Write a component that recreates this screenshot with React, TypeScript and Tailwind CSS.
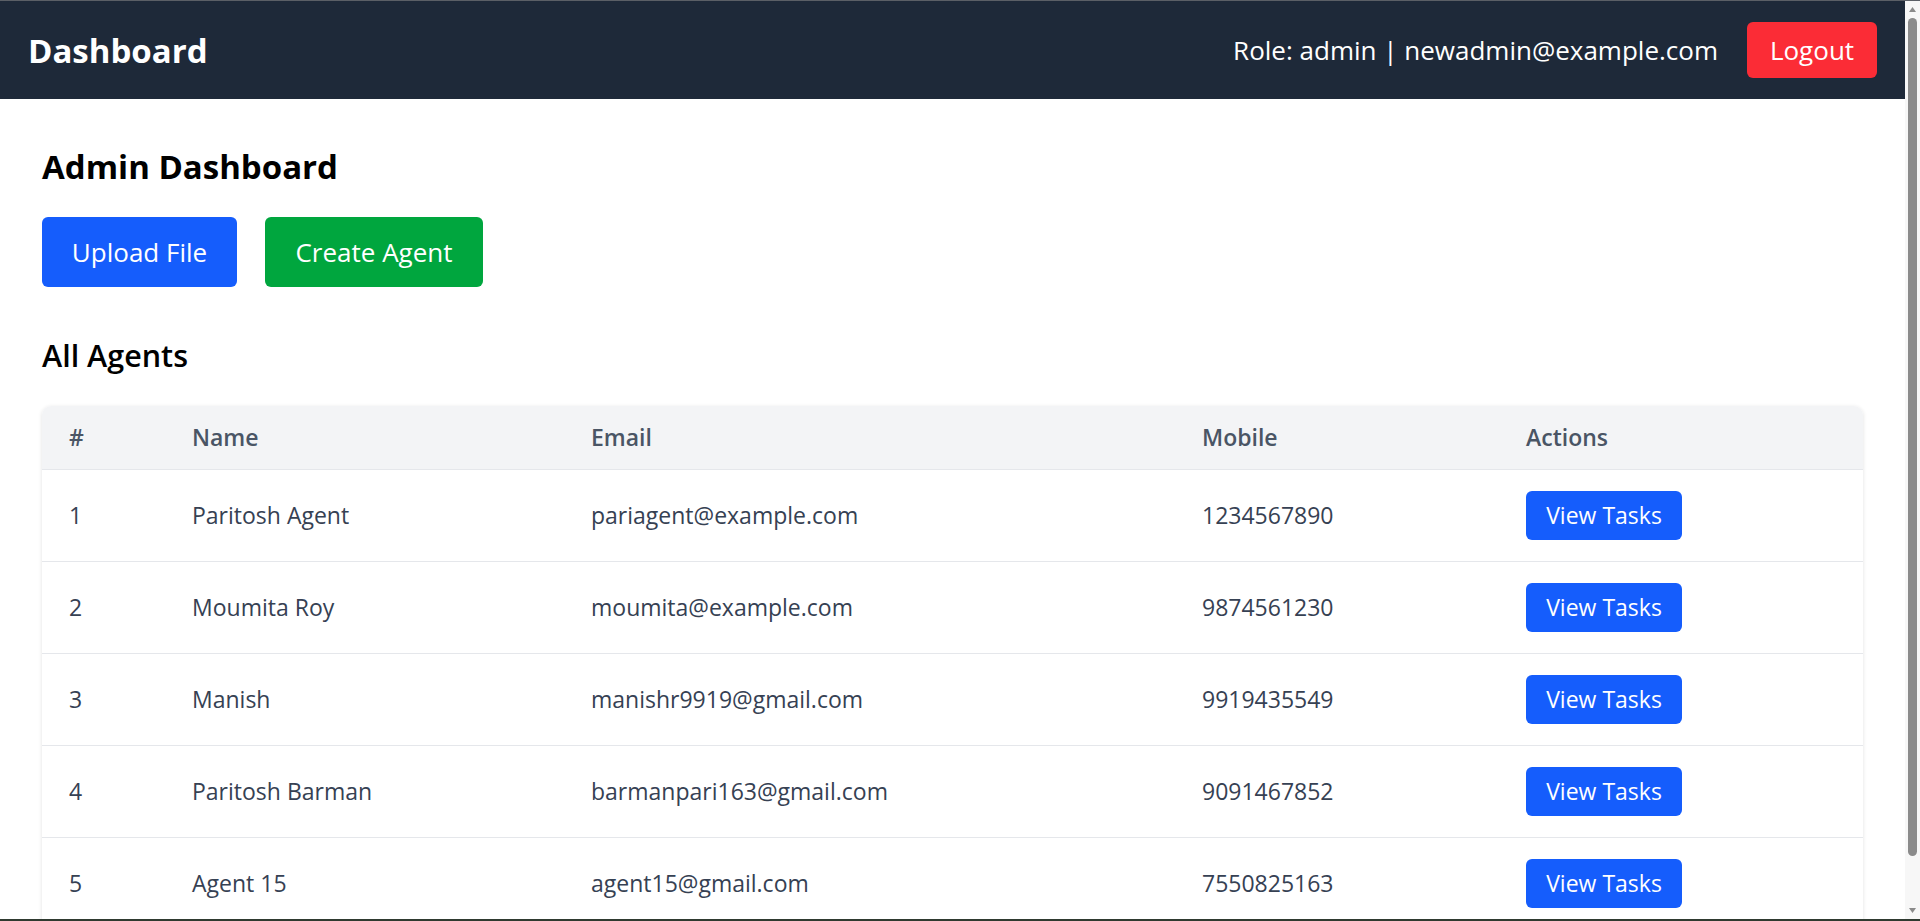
import React from 'react'

const agents = [
  { id: 1, name: 'Paritosh Agent', email: 'pariagent@example.com', mobile: '1234567890' },
  { id: 2, name: 'Moumita Roy', email: 'moumita@example.com', mobile: '9874561230' },
  { id: 3, name: 'Manish', email: 'manishr9919@gmail.com', mobile: '9919435549' },
  { id: 4, name: 'Paritosh Barman', email: 'barmanpari163@gmail.com', mobile: '9091467852' },
  { id: 5, name: 'Agent 15', email: 'agent15@gmail.com', mobile: '7550825163' },
]

function Scrollbar() {
  return (
    <div className="w-[15px] h-full bg-[#f7f7f7] flex flex-col items-center">
      <svg width="9" height="17" viewBox="0 0 9 17" className="shrink-0">
        <path d="M1 11 L4.5 6 L8 11 Z" fill="#8a8a8a" />
      </svg>
      <div className="w-[9px] h-[838px] rounded-full bg-[#8b8b8b]" />
      <div className="flex-1" />
      <svg width="9" height="17" viewBox="0 0 9 17" className="shrink-0">
        <path d="M1 6 L4.5 11 L8 6 Z" fill="#8a8a8a" />
      </svg>
    </div>
  )
}

export default function App() {
  return (
    <div className="w-[1920px] h-[921px] flex flex-col overflow-hidden bg-white font-['Segoe_UI','Open_Sans',sans-serif]">
      <div className="h-px bg-[#5b5f66] shrink-0" />
      <div className="flex flex-1 min-h-0">
        <div className="flex-1 min-w-0 overflow-hidden">
          {/* navbar */}
          <nav className="h-[98px] bg-[#1e2939] flex items-center justify-between px-[28px] text-white">
            <div className="text-[33px] font-bold pt-[2px]">Dashboard</div>
            <div className="flex items-center">
              <span className="text-[26px]">Role: admin | newadmin@example.com</span>
              <button className="ml-[29px] h-[56px] w-[130px] rounded-[6px] bg-[#fb2c36] text-[26px] text-white">
                Logout
              </button>
            </div>
          </nav>

          <main className="px-[42px] pt-[44px]">
            <h1 className="text-[33px] font-bold leading-[48px] text-black">Admin Dashboard</h1>

            <div className="flex gap-[28px] mt-[26px]">
              <button className="h-[70px] w-[195px] rounded-[6px] bg-[#155dfc] text-[26px] text-white">
                Upload File
              </button>
              <button className="h-[70px] w-[218px] rounded-[6px] bg-[#00a63e] text-[26px] text-white">
                Create Agent
              </button>
            </div>

            <h2 className="mt-[47px] text-[30.5px] font-semibold leading-[42px] text-black">All Agents</h2>

            <div className="mt-[30px] rounded-[9px] bg-white shadow-[0_1px_4px_rgba(0,0,0,0.12)] overflow-hidden">
              <table className="w-full table-fixed text-left text-[23px] text-[#364153]">
                <thead className="bg-[#f3f4f6] text-[#4a5565]">
                  <tr className="h-[63px]">
                    <th className="w-[123px] pl-[27px] font-semibold">#</th>
                    <th className="w-[399px] pl-[27px] font-semibold">Name</th>
                    <th className="w-[611px] pl-[27px] font-semibold">Email</th>
                    <th className="w-[324px] pl-[27px] font-semibold">Mobile</th>
                    <th className="pl-[27px] font-semibold">Actions</th>
                  </tr>
                </thead>
                <tbody>
                  {agents.map((a) => (
                    <tr key={a.id} className="h-[92px] border-t border-[#e5e7eb]">
                      <td className="pl-[27px]">{a.id}</td>
                      <td className="pl-[27px]">{a.name}</td>
                      <td className="pl-[27px]">{a.email}</td>
                      <td className="pl-[27px]">{a.mobile}</td>
                      <td className="pl-[27px]">
                        <button className="h-[49px] w-[156px] rounded-[6px] bg-[#155dfc] text-[23px] text-white">
                          View Tasks
                        </button>
                      </td>
                    </tr>
                  ))}
                </tbody>
              </table>
            </div>
          </main>
        </div>
        <Scrollbar />
      </div>
      <div className="h-[2px] bg-[#2f3a30] shrink-0" />
    </div>
  )
}
